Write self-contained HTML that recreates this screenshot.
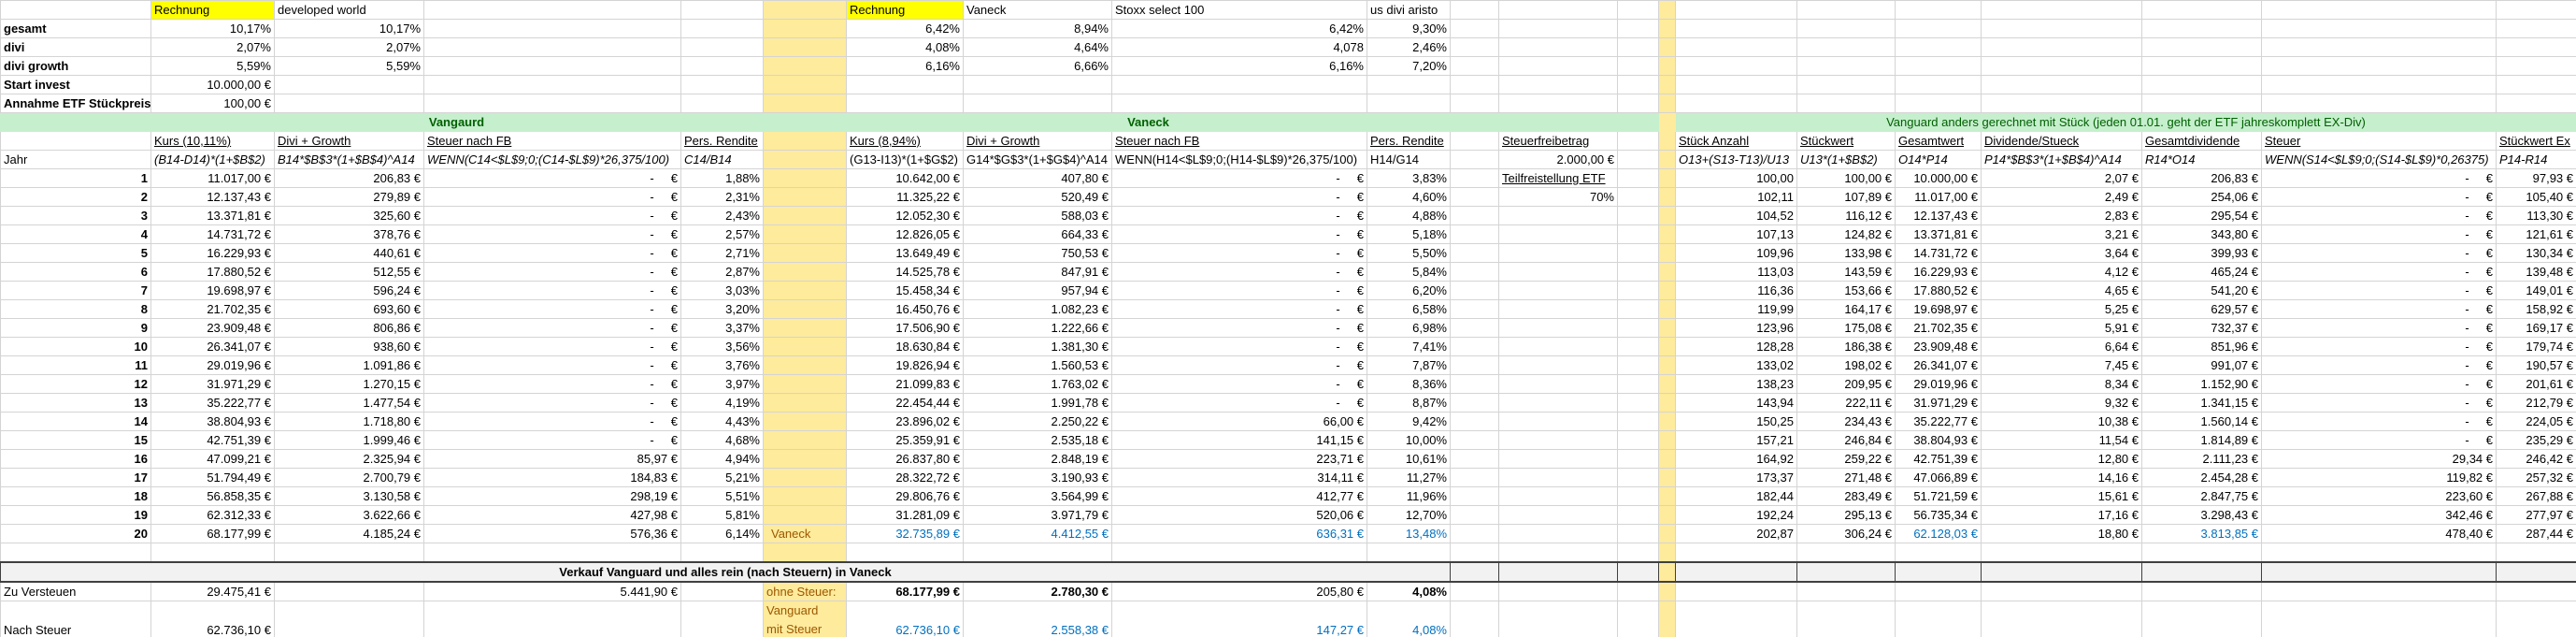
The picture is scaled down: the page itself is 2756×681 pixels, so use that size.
<!DOCTYPE html>
<html><head><meta charset="utf-8">
<style>
html,body{margin:0;padding:0;background:#fff;width:2756px;height:681px;overflow:hidden}
table{border-collapse:collapse;table-layout:fixed;width:2756px;font-family:"Liberation Sans",Arial,sans-serif;font-size:13px;color:#000}
td{border:1px solid #d4d4d4;height:19px;padding:0 3px;white-space:nowrap;overflow:hidden;line-height:18px;vertical-align:bottom}
tr{height:20px}
.r{text-align:right}.b{font-weight:bold}.i{font-style:italic}.u{text-decoration:underline}
.y{background:#ffeb9c;color:#9c5700}
.hy{background:#ffff00}
.bl{color:#0070c0}
.g{background:#c6efce;color:#006100;border-color:#c6efce}
.gr td{background:#f2f2f2;border:1px solid #404040;border-top:2px solid #404040;border-bottom:2px solid #404040}
.gr td.y{background:#ffeb9c}
.tall{height:41px}
.tall td{height:40px}
</style></head><body>
<table>
<colgroup>
<col style="width:161px"><col style="width:132px"><col style="width:160px"><col style="width:275px"><col style="width:88px"><col style="width:89px"><col style="width:125px"><col style="width:159px"><col style="width:273px"><col style="width:89px"><col style="width:52px"><col style="width:127px"><col style="width:44px"><col style="width:18px"><col style="width:130px"><col style="width:105px"><col style="width:92px"><col style="width:172px"><col style="width:128px"><col style="width:251px"><col style="width:86px">
</colgroup>
<tr><td></td><td class="hy">Rechnung</td><td>developed world</td><td></td><td></td><td class="y"></td><td class="hy">Rechnung</td><td>Vaneck</td><td>Stoxx select 100</td><td>us divi aristo</td><td></td><td></td><td></td><td class="y"></td><td></td><td></td><td></td><td></td><td></td><td></td><td></td></tr>
<tr><td class="b">gesamt</td><td class="r">10,17%</td><td class="r">10,17%</td><td></td><td></td><td class="y"></td><td class="r">6,42%</td><td class="r">8,94%</td><td class="r">6,42%</td><td class="r">9,30%</td><td></td><td></td><td></td><td class="y"></td><td></td><td></td><td></td><td></td><td></td><td></td><td></td></tr>
<tr><td class="b">divi</td><td class="r">2,07%</td><td class="r">2,07%</td><td></td><td></td><td class="y"></td><td class="r">4,08%</td><td class="r">4,64%</td><td class="r">4,078</td><td class="r">2,46%</td><td></td><td></td><td></td><td class="y"></td><td></td><td></td><td></td><td></td><td></td><td></td><td></td></tr>
<tr><td class="b">divi growth</td><td class="r">5,59%</td><td class="r">5,59%</td><td></td><td></td><td class="y"></td><td class="r">6,16%</td><td class="r">6,66%</td><td class="r">6,16%</td><td class="r">7,20%</td><td></td><td></td><td></td><td class="y"></td><td></td><td></td><td></td><td></td><td></td><td></td><td></td></tr>
<tr><td class="b">Start invest</td><td class="r">10.000,00 €</td><td></td><td></td><td></td><td class="y"></td><td></td><td></td><td></td><td></td><td></td><td></td><td></td><td class="y"></td><td></td><td></td><td></td><td></td><td></td><td></td><td></td></tr>
<tr><td class="b">Annahme ETF Stückpreis</td><td class="r">100,00 €</td><td></td><td></td><td></td><td class="y"></td><td></td><td></td><td></td><td></td><td></td><td></td><td></td><td class="y"></td><td></td><td></td><td></td><td></td><td></td><td></td><td></td></tr>
<tr><td colspan="6" class="g b" style="text-align:center;padding-left:74px">Vangaurd</td><td colspan="4" class="g b" style="text-align:center">Vaneck</td><td class="g"></td><td class="g"></td><td class="g"></td><td class="y" style="border-color:#ffeb9c"></td><td colspan="7" class="g" style="text-align:center">Vanguard anders gerechnet mit Stück (jeden 01.01. geht der ETF jahreskomplett EX-Div)</td></tr>
<tr><td></td><td class="u">Kurs (10,11%)</td><td class="u">Divi + Growth</td><td class="u">Steuer nach FB</td><td class="u">Pers. Rendite</td><td class="y"></td><td class="u">Kurs (8,94%)</td><td class="u">Divi + Growth</td><td class="u">Steuer nach FB</td><td class="u">Pers. Rendite</td><td></td><td class="u">Steuerfreibetrag</td><td></td><td class="y"></td><td class="u">Stück Anzahl</td><td class="u">Stückwert</td><td class="u">Gesamtwert</td><td class="u">Dividende/Stueck</td><td class="u">Gesamtdividende</td><td class="u">Steuer</td><td class="u">Stückwert Ex</td></tr>
<tr><td>Jahr</td><td class="i">(B14-D14)*(1+$B$2)</td><td class="i">B14*$B$3*(1+$B$4)^A14</td><td class="i">WENN(C14&lt;$L$9;0;(C14-$L$9)*26,375/100)</td><td class="i">C14/B14</td><td class="y"></td><td>(G13-I13)*(1+$G$2)</td><td>G14*$G$3*(1+$G$4)^A14</td><td>WENN(H14&lt;$L$9;0;(H14-$L$9)*26,375/100)</td><td>H14/G14</td><td></td><td class="r">2.000,00 €</td><td></td><td class="y"></td><td class="i">O13+(S13-T13)/U13</td><td class="i">U13*(1+$B$2)</td><td class="i">O14*P14</td><td class="i">P14*$B$3*(1+$B$4)^A14</td><td class="i">R14*O14</td><td class="i">WENN(S14&lt;$L$9;0;(S14-$L$9)*0,26375)</td><td class="i">P14-R14</td></tr>
<tr><td class="r b">1</td><td class="r">11.017,00 €</td><td class="r">206,83 €</td><td class="r">-&nbsp;&nbsp;&nbsp;&nbsp;&nbsp;€</td><td class="r">1,88%</td><td class="y"></td><td class="r">10.642,00 €</td><td class="r">407,80 €</td><td class="r">-&nbsp;&nbsp;&nbsp;&nbsp;&nbsp;€</td><td class="r">3,83%</td><td></td><td class="u">Teilfreistellung ETF</td><td></td><td class="y"></td><td class="r">100,00</td><td class="r">100,00 €</td><td class="r">10.000,00 €</td><td class="r">2,07 €</td><td class="r">206,83 €</td><td class="r">-&nbsp;&nbsp;&nbsp;&nbsp;&nbsp;€</td><td class="r">97,93 €</td></tr>
<tr><td class="r b">2</td><td class="r">12.137,43 €</td><td class="r">279,89 €</td><td class="r">-&nbsp;&nbsp;&nbsp;&nbsp;&nbsp;€</td><td class="r">2,31%</td><td class="y"></td><td class="r">11.325,22 €</td><td class="r">520,49 €</td><td class="r">-&nbsp;&nbsp;&nbsp;&nbsp;&nbsp;€</td><td class="r">4,60%</td><td></td><td class="r">70%</td><td></td><td class="y"></td><td class="r">102,11</td><td class="r">107,89 €</td><td class="r">11.017,00 €</td><td class="r">2,49 €</td><td class="r">254,06 €</td><td class="r">-&nbsp;&nbsp;&nbsp;&nbsp;&nbsp;€</td><td class="r">105,40 €</td></tr>
<tr><td class="r b">3</td><td class="r">13.371,81 €</td><td class="r">325,60 €</td><td class="r">-&nbsp;&nbsp;&nbsp;&nbsp;&nbsp;€</td><td class="r">2,43%</td><td class="y"></td><td class="r">12.052,30 €</td><td class="r">588,03 €</td><td class="r">-&nbsp;&nbsp;&nbsp;&nbsp;&nbsp;€</td><td class="r">4,88%</td><td></td><td></td><td></td><td class="y"></td><td class="r">104,52</td><td class="r">116,12 €</td><td class="r">12.137,43 €</td><td class="r">2,83 €</td><td class="r">295,54 €</td><td class="r">-&nbsp;&nbsp;&nbsp;&nbsp;&nbsp;€</td><td class="r">113,30 €</td></tr>
<tr><td class="r b">4</td><td class="r">14.731,72 €</td><td class="r">378,76 €</td><td class="r">-&nbsp;&nbsp;&nbsp;&nbsp;&nbsp;€</td><td class="r">2,57%</td><td class="y"></td><td class="r">12.826,05 €</td><td class="r">664,33 €</td><td class="r">-&nbsp;&nbsp;&nbsp;&nbsp;&nbsp;€</td><td class="r">5,18%</td><td></td><td></td><td></td><td class="y"></td><td class="r">107,13</td><td class="r">124,82 €</td><td class="r">13.371,81 €</td><td class="r">3,21 €</td><td class="r">343,80 €</td><td class="r">-&nbsp;&nbsp;&nbsp;&nbsp;&nbsp;€</td><td class="r">121,61 €</td></tr>
<tr><td class="r b">5</td><td class="r">16.229,93 €</td><td class="r">440,61 €</td><td class="r">-&nbsp;&nbsp;&nbsp;&nbsp;&nbsp;€</td><td class="r">2,71%</td><td class="y"></td><td class="r">13.649,49 €</td><td class="r">750,53 €</td><td class="r">-&nbsp;&nbsp;&nbsp;&nbsp;&nbsp;€</td><td class="r">5,50%</td><td></td><td></td><td></td><td class="y"></td><td class="r">109,96</td><td class="r">133,98 €</td><td class="r">14.731,72 €</td><td class="r">3,64 €</td><td class="r">399,93 €</td><td class="r">-&nbsp;&nbsp;&nbsp;&nbsp;&nbsp;€</td><td class="r">130,34 €</td></tr>
<tr><td class="r b">6</td><td class="r">17.880,52 €</td><td class="r">512,55 €</td><td class="r">-&nbsp;&nbsp;&nbsp;&nbsp;&nbsp;€</td><td class="r">2,87%</td><td class="y"></td><td class="r">14.525,78 €</td><td class="r">847,91 €</td><td class="r">-&nbsp;&nbsp;&nbsp;&nbsp;&nbsp;€</td><td class="r">5,84%</td><td></td><td></td><td></td><td class="y"></td><td class="r">113,03</td><td class="r">143,59 €</td><td class="r">16.229,93 €</td><td class="r">4,12 €</td><td class="r">465,24 €</td><td class="r">-&nbsp;&nbsp;&nbsp;&nbsp;&nbsp;€</td><td class="r">139,48 €</td></tr>
<tr><td class="r b">7</td><td class="r">19.698,97 €</td><td class="r">596,24 €</td><td class="r">-&nbsp;&nbsp;&nbsp;&nbsp;&nbsp;€</td><td class="r">3,03%</td><td class="y"></td><td class="r">15.458,34 €</td><td class="r">957,94 €</td><td class="r">-&nbsp;&nbsp;&nbsp;&nbsp;&nbsp;€</td><td class="r">6,20%</td><td></td><td></td><td></td><td class="y"></td><td class="r">116,36</td><td class="r">153,66 €</td><td class="r">17.880,52 €</td><td class="r">4,65 €</td><td class="r">541,20 €</td><td class="r">-&nbsp;&nbsp;&nbsp;&nbsp;&nbsp;€</td><td class="r">149,01 €</td></tr>
<tr><td class="r b">8</td><td class="r">21.702,35 €</td><td class="r">693,60 €</td><td class="r">-&nbsp;&nbsp;&nbsp;&nbsp;&nbsp;€</td><td class="r">3,20%</td><td class="y"></td><td class="r">16.450,76 €</td><td class="r">1.082,23 €</td><td class="r">-&nbsp;&nbsp;&nbsp;&nbsp;&nbsp;€</td><td class="r">6,58%</td><td></td><td></td><td></td><td class="y"></td><td class="r">119,99</td><td class="r">164,17 €</td><td class="r">19.698,97 €</td><td class="r">5,25 €</td><td class="r">629,57 €</td><td class="r">-&nbsp;&nbsp;&nbsp;&nbsp;&nbsp;€</td><td class="r">158,92 €</td></tr>
<tr><td class="r b">9</td><td class="r">23.909,48 €</td><td class="r">806,86 €</td><td class="r">-&nbsp;&nbsp;&nbsp;&nbsp;&nbsp;€</td><td class="r">3,37%</td><td class="y"></td><td class="r">17.506,90 €</td><td class="r">1.222,66 €</td><td class="r">-&nbsp;&nbsp;&nbsp;&nbsp;&nbsp;€</td><td class="r">6,98%</td><td></td><td></td><td></td><td class="y"></td><td class="r">123,96</td><td class="r">175,08 €</td><td class="r">21.702,35 €</td><td class="r">5,91 €</td><td class="r">732,37 €</td><td class="r">-&nbsp;&nbsp;&nbsp;&nbsp;&nbsp;€</td><td class="r">169,17 €</td></tr>
<tr><td class="r b">10</td><td class="r">26.341,07 €</td><td class="r">938,60 €</td><td class="r">-&nbsp;&nbsp;&nbsp;&nbsp;&nbsp;€</td><td class="r">3,56%</td><td class="y"></td><td class="r">18.630,84 €</td><td class="r">1.381,30 €</td><td class="r">-&nbsp;&nbsp;&nbsp;&nbsp;&nbsp;€</td><td class="r">7,41%</td><td></td><td></td><td></td><td class="y"></td><td class="r">128,28</td><td class="r">186,38 €</td><td class="r">23.909,48 €</td><td class="r">6,64 €</td><td class="r">851,96 €</td><td class="r">-&nbsp;&nbsp;&nbsp;&nbsp;&nbsp;€</td><td class="r">179,74 €</td></tr>
<tr><td class="r b">11</td><td class="r">29.019,96 €</td><td class="r">1.091,86 €</td><td class="r">-&nbsp;&nbsp;&nbsp;&nbsp;&nbsp;€</td><td class="r">3,76%</td><td class="y"></td><td class="r">19.826,94 €</td><td class="r">1.560,53 €</td><td class="r">-&nbsp;&nbsp;&nbsp;&nbsp;&nbsp;€</td><td class="r">7,87%</td><td></td><td></td><td></td><td class="y"></td><td class="r">133,02</td><td class="r">198,02 €</td><td class="r">26.341,07 €</td><td class="r">7,45 €</td><td class="r">991,07 €</td><td class="r">-&nbsp;&nbsp;&nbsp;&nbsp;&nbsp;€</td><td class="r">190,57 €</td></tr>
<tr><td class="r b">12</td><td class="r">31.971,29 €</td><td class="r">1.270,15 €</td><td class="r">-&nbsp;&nbsp;&nbsp;&nbsp;&nbsp;€</td><td class="r">3,97%</td><td class="y"></td><td class="r">21.099,83 €</td><td class="r">1.763,02 €</td><td class="r">-&nbsp;&nbsp;&nbsp;&nbsp;&nbsp;€</td><td class="r">8,36%</td><td></td><td></td><td></td><td class="y"></td><td class="r">138,23</td><td class="r">209,95 €</td><td class="r">29.019,96 €</td><td class="r">8,34 €</td><td class="r">1.152,90 €</td><td class="r">-&nbsp;&nbsp;&nbsp;&nbsp;&nbsp;€</td><td class="r">201,61 €</td></tr>
<tr><td class="r b">13</td><td class="r">35.222,77 €</td><td class="r">1.477,54 €</td><td class="r">-&nbsp;&nbsp;&nbsp;&nbsp;&nbsp;€</td><td class="r">4,19%</td><td class="y"></td><td class="r">22.454,44 €</td><td class="r">1.991,78 €</td><td class="r">-&nbsp;&nbsp;&nbsp;&nbsp;&nbsp;€</td><td class="r">8,87%</td><td></td><td></td><td></td><td class="y"></td><td class="r">143,94</td><td class="r">222,11 €</td><td class="r">31.971,29 €</td><td class="r">9,32 €</td><td class="r">1.341,15 €</td><td class="r">-&nbsp;&nbsp;&nbsp;&nbsp;&nbsp;€</td><td class="r">212,79 €</td></tr>
<tr><td class="r b">14</td><td class="r">38.804,93 €</td><td class="r">1.718,80 €</td><td class="r">-&nbsp;&nbsp;&nbsp;&nbsp;&nbsp;€</td><td class="r">4,43%</td><td class="y"></td><td class="r">23.896,02 €</td><td class="r">2.250,22 €</td><td class="r">66,00 €</td><td class="r">9,42%</td><td></td><td></td><td></td><td class="y"></td><td class="r">150,25</td><td class="r">234,43 €</td><td class="r">35.222,77 €</td><td class="r">10,38 €</td><td class="r">1.560,14 €</td><td class="r">-&nbsp;&nbsp;&nbsp;&nbsp;&nbsp;€</td><td class="r">224,05 €</td></tr>
<tr><td class="r b">15</td><td class="r">42.751,39 €</td><td class="r">1.999,46 €</td><td class="r">-&nbsp;&nbsp;&nbsp;&nbsp;&nbsp;€</td><td class="r">4,68%</td><td class="y"></td><td class="r">25.359,91 €</td><td class="r">2.535,18 €</td><td class="r">141,15 €</td><td class="r">10,00%</td><td></td><td></td><td></td><td class="y"></td><td class="r">157,21</td><td class="r">246,84 €</td><td class="r">38.804,93 €</td><td class="r">11,54 €</td><td class="r">1.814,89 €</td><td class="r">-&nbsp;&nbsp;&nbsp;&nbsp;&nbsp;€</td><td class="r">235,29 €</td></tr>
<tr><td class="r b">16</td><td class="r">47.099,21 €</td><td class="r">2.325,94 €</td><td class="r">85,97 €</td><td class="r">4,94%</td><td class="y"></td><td class="r">26.837,80 €</td><td class="r">2.848,19 €</td><td class="r">223,71 €</td><td class="r">10,61%</td><td></td><td></td><td></td><td class="y"></td><td class="r">164,92</td><td class="r">259,22 €</td><td class="r">42.751,39 €</td><td class="r">12,80 €</td><td class="r">2.111,23 €</td><td class="r">29,34 €</td><td class="r">246,42 €</td></tr>
<tr><td class="r b">17</td><td class="r">51.794,49 €</td><td class="r">2.700,79 €</td><td class="r">184,83 €</td><td class="r">5,21%</td><td class="y"></td><td class="r">28.322,72 €</td><td class="r">3.190,93 €</td><td class="r">314,11 €</td><td class="r">11,27%</td><td></td><td></td><td></td><td class="y"></td><td class="r">173,37</td><td class="r">271,48 €</td><td class="r">47.066,89 €</td><td class="r">14,16 €</td><td class="r">2.454,28 €</td><td class="r">119,82 €</td><td class="r">257,32 €</td></tr>
<tr><td class="r b">18</td><td class="r">56.858,35 €</td><td class="r">3.130,58 €</td><td class="r">298,19 €</td><td class="r">5,51%</td><td class="y"></td><td class="r">29.806,76 €</td><td class="r">3.564,99 €</td><td class="r">412,77 €</td><td class="r">11,96%</td><td></td><td></td><td></td><td class="y"></td><td class="r">182,44</td><td class="r">283,49 €</td><td class="r">51.721,59 €</td><td class="r">15,61 €</td><td class="r">2.847,75 €</td><td class="r">223,60 €</td><td class="r">267,88 €</td></tr>
<tr><td class="r b">19</td><td class="r">62.312,33 €</td><td class="r">3.622,66 €</td><td class="r">427,98 €</td><td class="r">5,81%</td><td class="y"></td><td class="r">31.281,09 €</td><td class="r">3.971,79 €</td><td class="r">520,06 €</td><td class="r">12,70%</td><td></td><td></td><td></td><td class="y"></td><td class="r">192,24</td><td class="r">295,13 €</td><td class="r">56.735,34 €</td><td class="r">17,16 €</td><td class="r">3.298,43 €</td><td class="r">342,46 €</td><td class="r">277,97 €</td></tr>
<tr><td class="r b">20</td><td class="r">68.177,99 €</td><td class="r">4.185,24 €</td><td class="r">576,36 €</td><td class="r">6,14%</td><td class="y" style="padding-left:8px">Vaneck</td><td class="r bl">32.735,89 €</td><td class="r bl">4.412,55 €</td><td class="r bl">636,31 €</td><td class="r bl">13,48%</td><td></td><td></td><td></td><td class="y"></td><td class="r">202,87</td><td class="r">306,24 €</td><td class="r bl">62.128,03 €</td><td class="r">18,80 €</td><td class="r bl">3.813,85 €</td><td class="r">478,40 €</td><td class="r">287,44 €</td></tr>
<tr><td></td><td></td><td></td><td></td><td></td><td class="y"></td><td></td><td></td><td></td><td></td><td></td><td></td><td></td><td class="y"></td><td></td><td></td><td></td><td></td><td></td><td></td><td></td></tr>
<tr class="gr"><td colspan="10" class="b" style="text-align:center">Verkauf Vanguard und alles rein (nach Steuern) in Vaneck</td><td></td><td></td><td></td><td class="y"></td><td></td><td></td><td></td><td></td><td></td><td></td><td></td></tr>
<tr><td>Zu Versteuen</td><td class="r">29.475,41 €</td><td></td><td class="r">5.441,90 €</td><td></td><td class="y">ohne Steuer:</td><td class="r b">68.177,99 €</td><td class="r b">2.780,30 €</td><td class="r">205,80 €</td><td class="r b">4,08%</td><td></td><td></td><td></td><td class="y"></td><td></td><td></td><td></td><td></td><td></td><td></td><td></td></tr>
<tr class="tall"><td>Nach Steuer</td><td class="r">62.736,10 €</td><td></td><td></td><td></td><td class="y" style="line-height:20px">Vanguard<br>mit Steuer</td><td class="r bl">62.736,10 €</td><td class="r bl">2.558,38 €</td><td class="r bl">147,27 €</td><td class="r bl">4,08%</td><td></td><td></td><td></td><td class="y"></td><td></td><td></td><td></td><td></td><td></td><td></td><td></td></tr>
</table>
</body></html>
